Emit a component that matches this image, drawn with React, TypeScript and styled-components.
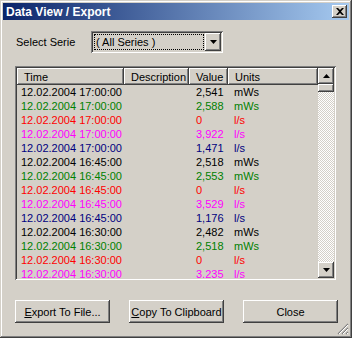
import React from 'react';
import styled, { createGlobalStyle } from 'styled-components';

const GlobalStyle = createGlobalStyle`
  html, body {
    margin: 0;
    padding: 0;
    background: #d4d0c8;
    overflow: hidden;
  }
  * {
    box-sizing: border-box;
  }
`;

const FONT = `"Liberation Sans", Arial, sans-serif`;
const RAISED = `inset -1px -1px #404040, inset 1px 1px #ffffff, inset -2px -2px #808080, inset 2px 2px #d4d0c8`;
const SUNKEN = `inset 1px 1px #808080, inset -1px -1px #ffffff, inset 2px 2px #404040, inset -2px -2px #d4d0c8`;

const Window = styled.div`
  position: relative;
  display: flex;
  flex-direction: column;
  width: 352px;
  height: 338px;
  padding: 3px;
  background: #d4d0c8;
  box-shadow: inset -1px -1px #404040, inset 1px 1px #d4d0c8, inset -2px -2px #808080, inset 2px 2px #ffffff;
  font-family: ${FONT};
  font-size: 11px;
  color: #000;
`;

const TitleBar = styled.div`
  display: flex;
  align-items: center;
  justify-content: space-between;
  height: 17px;
  padding: 0 2px 0 3px;
  background: linear-gradient(to right, #0a246a, #a6caf0);
`;

const Title = styled.span`
  color: #fff;
  font-weight: bold;
  font-size: 12px;
  letter-spacing: 0;
`;

const CaptionButton = styled.div`
  display: flex;
  align-items: center;
  justify-content: center;
  width: 15px;
  height: 13px;
  background: #d4d0c8;
  box-shadow: ${RAISED};
`;

const Body = styled.div`
  display: flex;
  flex-direction: column;
  padding: 11px 0 0 12px;
`;

const SerieRow = styled.div`
  display: flex;
  align-items: center;
`;

const Label = styled.span`
  width: 76px;
  padding-left: 1px;
`;

const Combo = styled.div`
  display: flex;
  align-items: stretch;
  width: 132px;
  height: 22px;
  padding: 2px;
  background: #d4d0c8;
  box-shadow: ${SUNKEN};
`;

const ComboText = styled.div`
  flex: 1;
  display: flex;
  align-items: center;
  margin: 1px;
  padding-left: 1px;
  border: 1px dotted #000;
`;

const ArrowButton = styled.div<{ $height: number }>`
  display: flex;
  align-items: center;
  justify-content: center;
  width: 16px;
  height: ${p => p.$height}px;
  background: #d4d0c8;
  box-shadow: ${RAISED};
  flex-shrink: 0;
`;

const ListFrame = styled.div`
  display: flex;
  width: 321px;
  height: 214px;
  margin-top: 13px;
  padding: 2px;
  box-shadow: ${SUNKEN};
`;

const ListBody = styled.div`
  flex: 1;
  overflow: hidden;
  display: flex;
  flex-direction: column;
`;

const HeaderRow = styled.div`
  display: flex;
  height: 17px;
  flex-shrink: 0;
`;

const HeaderCell = styled.div<{ $width?: number }>`
  display: flex;
  align-items: center;
  ${p => (p.$width ? `width: ${p.$width}px;` : 'flex: 1;')}
  padding-left: 7px;
  box-shadow: ${RAISED};
  flex-shrink: 0;
`;

const Row = styled.div<{ $color: string }>`
  display: flex;
  align-items: center;
  height: 14px;
  flex-shrink: 0;
  color: ${p => p.$color};
`;

const Cell = styled.div<{ $width?: number; $pad: number }>`
  ${p => (p.$width ? `width: ${p.$width}px;` : 'flex: 1;')}
  padding-left: ${p => p.$pad}px;
  white-space: nowrap;
  flex-shrink: 0;
`;

const ScrollBar = styled.div`
  display: flex;
  flex-direction: column;
  width: 16px;
`;

const Thumb = styled.div`
  height: 8px;
  background: #d4d0c8;
  box-shadow: ${RAISED};
`;

const Track = styled.div`
  flex: 1;
  background-image: conic-gradient(#ffffff 25%, #d4d0c8 0 50%, #ffffff 0 75%, #d4d0c8 0);
  background-size: 2px 2px;
`;

const ButtonRow = styled.div`
  display: flex;
  gap: 19px;
  margin-top: 20px;
`;

const Button = styled.div`
  display: flex;
  align-items: center;
  justify-content: center;
  width: 95px;
  height: 23px;
  background: #d4d0c8;
  box-shadow: ${RAISED};
`;

const Grip = styled.svg`
  position: absolute;
  right: 3px;
  bottom: 3px;
`;

const COLS = { time: 107, desc: 65, value: 39 };

const colors = ['#000000', '#008000', '#ff0000', '#ff00ff', '#000080'];

const rows = [
  ['17:00:00', '2,541', 'mWs'],
  ['17:00:00', '2,588', 'mWs'],
  ['17:00:00', '0', 'l/s'],
  ['17:00:00', '3,922', 'l/s'],
  ['17:00:00', '1,471', 'l/s'],
  ['16:45:00', '2,518', 'mWs'],
  ['16:45:00', '2,553', 'mWs'],
  ['16:45:00', '0', 'l/s'],
  ['16:45:00', '3,529', 'l/s'],
  ['16:45:00', '1,176', 'l/s'],
  ['16:30:00', '2,482', 'mWs'],
  ['16:30:00', '2,518', 'mWs'],
  ['16:30:00', '0', 'l/s'],
  ['16:30:00', '3,235', 'l/s'],
];

const Triangle = ({ up }: { up?: boolean }) => (
  <svg width="7" height="4" viewBox="0 0 7 4">
    <polygon points={up ? '3.5,0 7,4 0,4' : '0,0 7,0 3.5,4'} fill="#000" />
  </svg>
);

export default function App() {
  return (
    <>
      <GlobalStyle />
      <Window>
        <TitleBar>
          <Title>Data View / Export</Title>
          <CaptionButton>
            <svg width="8" height="7" viewBox="0 0 8 7">
              <path d="M0 0h2l2 2 2-2h2L5 3.5 8 7H6L4 5 2 7H0l3-3.5z" fill="#000" />
            </svg>
          </CaptionButton>
        </TitleBar>
        <Body>
          <SerieRow>
            <Label>Select Serie</Label>
            <Combo>
              <ComboText>( All Series )</ComboText>
              <ArrowButton $height={18}>
                <Triangle />
              </ArrowButton>
            </Combo>
          </SerieRow>
          <ListFrame>
            <ListBody>
              <HeaderRow>
                <HeaderCell $width={COLS.time}>Time</HeaderCell>
                <HeaderCell $width={COLS.desc}>Description</HeaderCell>
                <HeaderCell $width={COLS.value}>Value</HeaderCell>
                <HeaderCell>Units</HeaderCell>
              </HeaderRow>
              {rows.map((r, i) => (
                <Row key={i} $color={colors[i % 5]}>
                  <Cell $width={COLS.time} $pad={4}>12.02.2004 {r[0]}</Cell>
                  <Cell $width={COLS.desc} $pad={6}></Cell>
                  <Cell $width={COLS.value} $pad={7}>{r[1]}</Cell>
                  <Cell $pad={6}>{r[2]}</Cell>
                </Row>
              ))}
            </ListBody>
            <ScrollBar>
              <ArrowButton $height={16}>
                <Triangle up />
              </ArrowButton>
              <Thumb />
              <Track />
              <ArrowButton $height={16}>
                <Triangle />
              </ArrowButton>
            </ScrollBar>
          </ListFrame>
          <ButtonRow>
            <Button><span><u>E</u>xport To File...</span></Button>
            <Button><span><u>C</u>opy To Clipboard</span></Button>
            <Button>Close</Button>
          </ButtonRow>
        </Body>
        <Grip width="12" height="12" viewBox="0 0 12 12">
          <path d="M11 1L1 11M11 5L5 11M11 9L9 11" stroke="#808080" strokeWidth="1.2" />
          <path d="M11 2L2 11M11 6L6 11M11 10L10 11" stroke="#ffffff" strokeWidth="1" />
        </Grip>
      </Window>
    </>
  );
}
